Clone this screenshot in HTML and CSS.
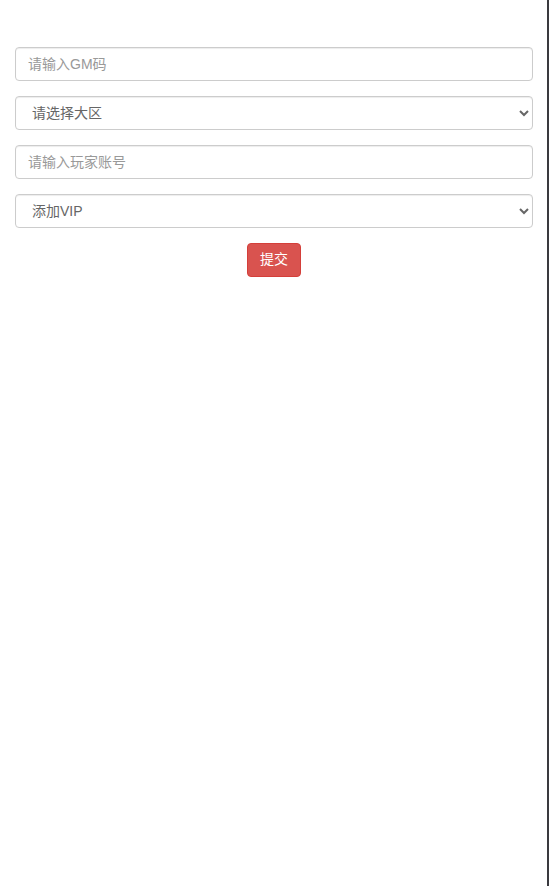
FILE: index.html
```html
<!DOCTYPE html>
<html>

<head>
	<meta charset="UTF-8">
	<link rel="stylesheet" href="styles.css">
</head>

<body>
	<div class="page">
		<!-- GM 表单 -->
		<form class="gm-form" onsubmit="return false">
			<div class="form-group">
				<input type="text" class="form-control" placeholder="请输入GM码">
			</div>
			<div class="form-group">
				<select class="form-control">
					<option>请选择大区</option>
				</select>
			</div>
			<div class="form-group">
				<input type="text" class="form-control" placeholder="请输入玩家账号">
			</div>
			<div class="form-group">
				<select class="form-control">
					<option>添加VIP</option>
				</select>
			</div>
			<div class="btn-row">
				<button type="submit" class="btn btn-danger">提交</button>
			</div>
		</form>
	</div>
</body>

</html>
```

FILE: styles.css
```css
		html,
		body {
			width: 100%;
			height: 100%;
			margin: 0;
			padding: 0;
			overflow: hidden;
		}

		body {
			font-family: "Liberation Sans", "Noto Sans CJK SC", sans-serif;
			font-size: 14px;
			line-height: 1.42857;
			color: #333;
			background: #fff;
		}

		/* 右侧深色边线 */
		.page {
			height: 100%;
			box-sizing: border-box;
			border-right: 2px solid #3a3a3f;
		}

		.gm-form {
			padding: 47px 14px 0 15px;
		}

		.form-group {
			margin-bottom: 15px;
		}

		.form-control {
			display: block;
			width: 100%;
			height: 34px;
			box-sizing: border-box;
			padding: 6px 12px;
			font-family: inherit;
			font-size: 14px;
			line-height: 1.42857;
			color: #666;
			background: #fff;
			border: 1px solid #ccc;
			border-radius: 4px;
			box-shadow: inset 0 1px 1px rgba(0, 0, 0, .075);
			margin: 0;
		}

		.form-control::placeholder {
			color: #999;
		}

		.btn-row {
			display: flex;
			justify-content: center;
		}

		.btn {
			padding: 6px 12px;
			font-family: inherit;
			font-size: 14px;
			line-height: 1.42857;
			border: 1px solid transparent;
			border-radius: 4px;
			cursor: pointer;
		}

		.btn-danger {
			color: #fff;
			background: #d9534f;
			border-color: #d43f3a;
		}
```
